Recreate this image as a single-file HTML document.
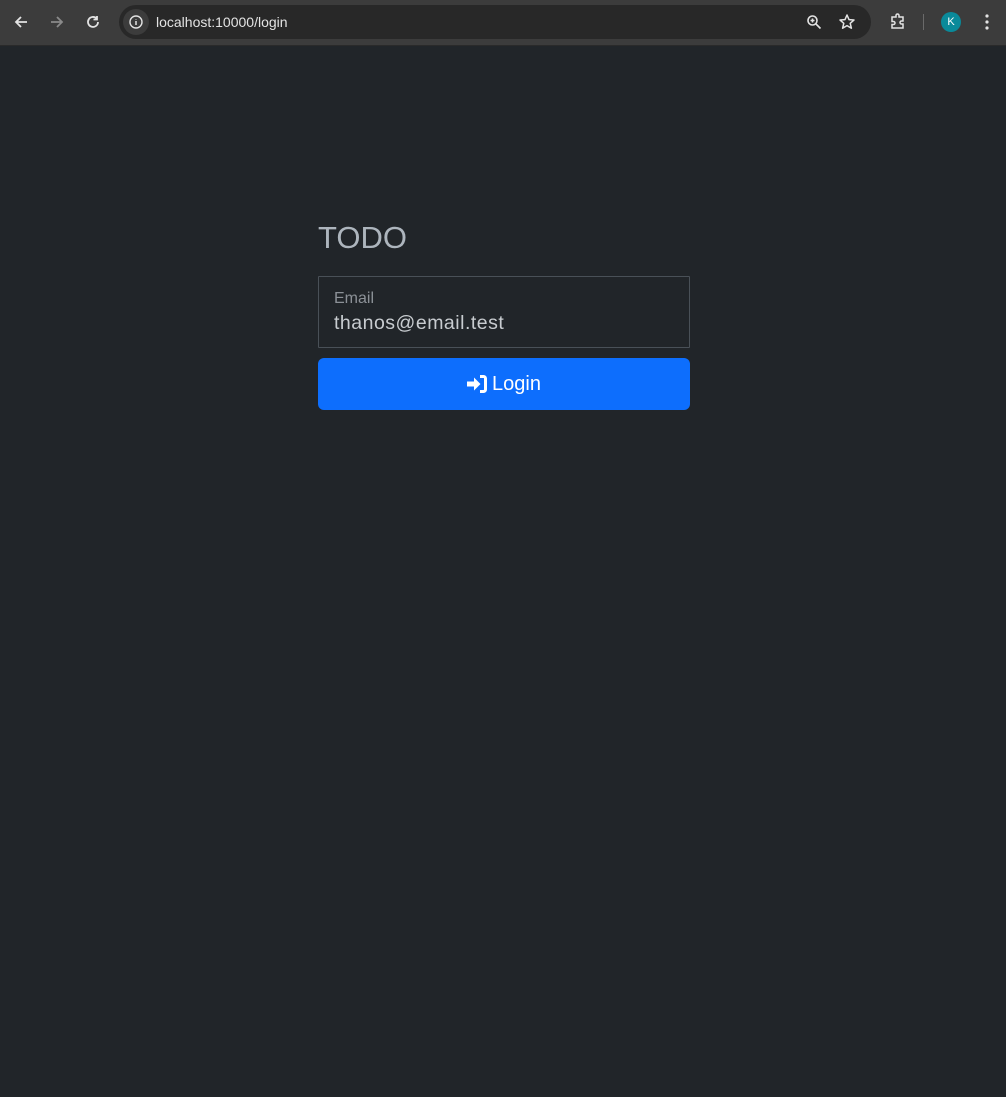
<!DOCTYPE html>
<html><head><meta charset="utf-8"><style>
*{box-sizing:border-box;margin:0;padding:0}
body{width:1006px;height:1097px;background:#212529;font-family:"Liberation Sans",sans-serif;overflow:hidden;position:relative}
.bar{position:absolute;left:0;top:0;width:1006px;height:46px;background:#3c3c3c;border-bottom:1px solid #2a2a2a}
.url{position:absolute;left:119px;top:5px;width:752px;height:34px;border-radius:17px;background:#282828}
.url .t{position:absolute;left:37px;top:9px;color:#e3e3e3;font-size:14px}
.ic{position:absolute}
h1{position:absolute;left:318px;top:220px;font-weight:400;font-size:31px;color:#adb5bd}
.field{position:absolute;left:318px;top:276px;width:372px;height:72px;border:1px solid #495057;border-radius:1px}
.lab{position:absolute;left:15px;top:13px;color:#8c9197;font-size:16px}
.val{position:absolute;left:15px;top:35px;color:#c8ccd0;font-size:19.5px;letter-spacing:0.5px}
.btn{position:absolute;left:318px;top:358px;width:372px;height:52px;background:#0d6efd;border-radius:6px;color:#fff;font-size:20px;display:flex;align-items:center;justify-content:center;gap:5px}
</style></head><body>
<div class="bar">
<svg class="ic" style="left:12px;top:13px" width="18" height="18" viewBox="0 0 18 18"><path d="M15 9H4M9 4L4 9l5 5" stroke="#e3e3e3" stroke-width="1.8" fill="none"/></svg>
<svg class="ic" style="left:48px;top:13px" width="18" height="18" viewBox="0 0 18 18"><path d="M3 9h11M9 4l5 5-5 5" stroke="#8a8a8a" stroke-width="1.8" fill="none"/></svg>
<svg class="ic" style="left:84px;top:13px" width="18" height="18" viewBox="0 0 18 18"><path d="M14 9a5 5 0 1 1-1.5-3.6M13 3v3.5H9.5" stroke="#e3e3e3" stroke-width="1.8" fill="none"/></svg>
<div class="url">
<div style="position:absolute;left:4px;top:4px;width:26px;height:26px;border-radius:13px;background:#3c3c3c"></div>
<svg class="ic" style="left:9px;top:9px" width="16" height="16" viewBox="0 0 16 16"><circle cx="8" cy="8" r="6" stroke="#e3e3e3" stroke-width="1.4" fill="none"/><path d="M8 7v4M8 5v.5" stroke="#e3e3e3" stroke-width="1.5"/></svg>
<span class="t">localhost:10000/login</span>
<svg class="ic" style="left:687px;top:9px" width="16" height="16" viewBox="0 0 16 16"><circle cx="6.5" cy="6.5" r="4.5" stroke="#e3e3e3" stroke-width="1.6" fill="none"/><path d="M10 10l4.5 4.5M6.5 4.5v4M4.5 6.5h4" stroke="#e3e3e3" stroke-width="1.6"/></svg>
<svg class="ic" style="left:719px;top:8px" width="18" height="18" viewBox="0 0 18 18"><path d="M9 2l2 4.6 5 .4-3.8 3.3 1.2 4.9L9 12.6 4.6 15.2l1.2-4.9L2 7l5-.4z" stroke="#e3e3e3" stroke-width="1.5" fill="none" stroke-linejoin="round"/></svg>
</div>
<svg class="ic" style="left:888px;top:12px" width="20" height="20" viewBox="0 0 20 20"><path d="M4 5h4V3.5a1.5 1.5 0 0 1 3 0V5h4v4h-1.5a1.5 1.5 0 0 0 0 3H15v4H4v-3.5h1.5a1.5 1.5 0 0 0 0-3H4z" stroke="#e3e3e3" stroke-width="1.5" fill="none"/></svg>
<div style="position:absolute;left:923px;top:14px;width:1px;height:16px;background:#6a6a6a"></div>
<div style="position:absolute;left:941px;top:12px;width:20px;height:20px;border-radius:10px;background:#0a8a9a;color:#fff;font-size:11px;text-align:center;line-height:20px">K</div>
<svg class="ic" style="left:978px;top:12px" width="18" height="20" viewBox="0 0 18 20"><circle cx="9" cy="4" r="1.6" fill="#e3e3e3"/><circle cx="9" cy="10" r="1.6" fill="#e3e3e3"/><circle cx="9" cy="16" r="1.6" fill="#e3e3e3"/></svg>
</div>
<h1>TODO</h1>
<div class="field"><div class="lab">Email</div><div class="val">thanos@email.test</div></div>
<div class="btn"><svg width="20" height="18" viewBox="0 0 20 18"><path d="M0 6.5h7V2.5l6.5 6.5L7 15.5v-4H0z" fill="#fff"/><path d="M13 1.5h3.5a2 2 0 0 1 2 2v11a2 2 0 0 1-2 2H13" stroke="#fff" stroke-width="3" fill="none"/></svg><span>Login</span></div>
</body></html>
